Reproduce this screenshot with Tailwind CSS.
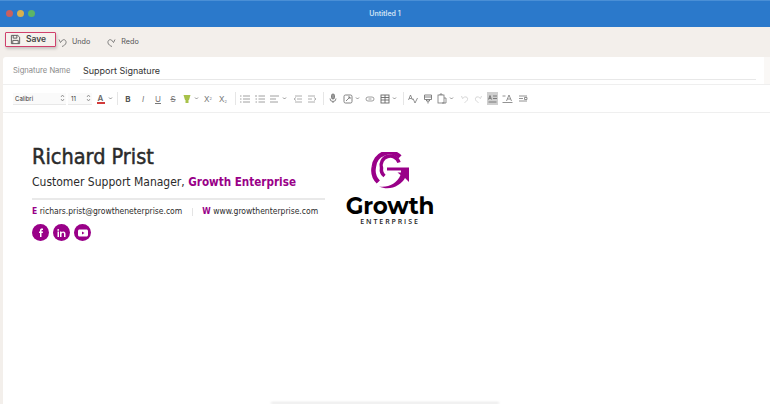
<!DOCTYPE html>
<html lang="en">
<head>
  <meta charset="UTF-8">
  <title>Untitled 1</title>
  <script src="https://cdn.jsdelivr.net/npm/@tailwindcss/browser@4"></script>
</head>
<body class="w-[770px] h-[404px] overflow-hidden bg-[#f3efeb] font-['Inter',sans-serif] text-[#3a3a3a]">
  <!-- Title bar -->
  <div class="relative h-[27px] flex items-center justify-center bg-[#2b79cb] border-t border-[#4a8fd6]">
    <div class="absolute left-[6px] top-[9px] flex gap-[4px]">
      <span class="w-[7px] h-[7px] rounded-full bg-[#c9605f]"></span>
      <span class="w-[7px] h-[7px] rounded-full bg-[#d8b04f]"></span>
      <span class="w-[7px] h-[7px] rounded-full bg-[#5cb567]"></span>
    </div>
    <span class="text-[7px] font-semibold text-[#cfe2f5]">Untitled 1</span>
  </div>

  <!-- Action bar -->
  <div class="h-[30px] flex items-center pl-[5px] text-[7.200px] text-[#555]">
    <div class="self-start mt-[5px] w-[51px] h-[15px] flex items-center gap-[5px] pl-[4px] border border-[#d0406c] rounded-[1px] bg-[#f5f1ed] shadow-[1px_2px_3px_rgba(0,0,0,0.18)]">
      <svg width="11" height="11" viewBox="0 0 12 12" fill="none" stroke="#555" stroke-width="1"><path d="M1.500 1.500h7l2 2v7h-9z"/><path d="M3.500 1.500v3h4v-3M3 10.500v-3.500h6v3.500"/></svg>
      <span class="text-[8.500px] font-semibold text-[#444]">Save</span>
    </div>
    <svg class="ml-[1px]" width="11" height="11" viewBox="0 0 11 11" fill="none" stroke="#666" stroke-width="0.8"><path d="M2 2.500l1.500 3 2-2.500c2-1 4 .5 3.500 3-.4 1.500-2 2.800-4 3.500"/></svg>
    <span class="ml-[4px]">Undo</span>
    <svg class="ml-[16px]" width="11" height="11" viewBox="0 0 11 11" fill="none" stroke="#666" stroke-width="0.8"><path d="M9 2.500l-1.500 3-2-2.500c-2-1-4 .5-3.500 3 .4 1.500 2 2.800 4 3.500"/></svg>
    <span class="ml-[4px]">Redo</span>
  </div>

  <!-- Editor card -->
  <div class="ml-[3px] h-[347px] bg-white rounded-tl-[3px] flex flex-col">
    <div class="h-[27px] shrink-0 flex items-center pl-[10px] pr-[8px] border-r-[6px] border-[#faf8f6]">
      <span class="w-[67px] text-[7.600px] text-[#8a8a8a]">Signature Name</span>
      <div class="flex-1 h-[18px] flex items-center pl-[3px] pt-[2px] border-b border-[#e8e8e8] text-[9px] text-[#333]">Support Signature</div>
    </div>

    <!-- Format toolbar -->
    <div class="h-[29px] shrink-0 flex items-center pl-[10px] border-y border-[#efefef] text-[#777]">
      <div class="w-[53px] h-[12px] flex items-center justify-between pl-[2px] pr-[1px] bg-[#fafafa] border-b border-[#e8e8e8]">
        <span class="text-[6px] text-[#333]">Calibri</span>
        <svg width="5" height="8" viewBox="0 0 5 8" fill="none" stroke="#777" stroke-width="0.7"><path d="M1 3l1.500-2L4 3M1 5l1.500 2L4 5"/></svg>
      </div>
      <div class="ml-[2px] w-[24px] h-[12px] flex items-center justify-between pl-[3px] pr-[1px] bg-[#fafafa] border-b border-[#e8e8e8]">
        <span class="text-[6px] text-[#333]">11</span>
        <svg width="5" height="8" viewBox="0 0 5 8" fill="none" stroke="#777" stroke-width="0.7"><path d="M1 3l1.500-2L4 3M1 5l1.500 2L4 5"/></svg>
      </div>
      <div class="ml-[3px] w-[11px] flex flex-col items-center">
        <span class="text-[8px] leading-[8px] font-semibold text-[#666]">A</span>
        <span class="w-[8px] h-[2px] bg-[#d23b3b]"></span>
      </div>
      <svg class="ml-[2px]" width="5" height="5" viewBox="0 0 5 5" fill="none" stroke="#777" stroke-width="0.8"><path d="M1 1.500l1.500 1.500L4 1.500"/></svg>
      <span class="ml-[4px] w-px h-[13px] bg-[#e6e6e6]"></span>

      <span class="ml-[5px] w-[10px] text-center text-[8px] font-bold text-[#555]">B</span>
      <span class="ml-[5px] w-[10px] text-center text-[8px] italic">I</span>
      <span class="ml-[5px] w-[10px] text-center text-[8px] underline">U</span>
      <span class="ml-[5px] w-[10px] text-center text-[8px] line-through">S</span>
      <svg class="ml-[4px]" width="10" height="10" viewBox="0 0 10 10" fill="#a8c24a"><path d="M1.500 1h7L7 6H3z"/><rect x="3.500" y="6" width="3" height="3"/></svg>
      <svg class="ml-[2px]" width="5" height="5" viewBox="0 0 5 5" fill="none" stroke="#777" stroke-width="0.8"><path d="M1 1.500l1.500 1.500L4 1.500"/></svg>
      <span class="ml-[5px] w-[10px] text-[8px]">X<sup class="text-[4px]">2</sup></span>
      <span class="ml-[5px] w-[10px] text-[8px]">X<sub class="text-[4px]">2</sub></span>
      <span class="ml-[6px] w-px h-[13px] bg-[#e6e6e6]"></span>

      <!-- Lists -->
      <svg class="ml-[4px]" width="10" height="10" viewBox="0 0 10 10" fill="none" stroke="#888" stroke-width="0.8"><path d="M3 2h7M3 5h7M3 8h7M0 2h1.500M0 5h1.500M0 8h1.500"/></svg>
      <svg class="ml-[5px]" width="10" height="10" viewBox="0 0 10 10" fill="none" stroke="#888" stroke-width="0.8"><path d="M3.500 2h6.500M3.500 5h6.500M3.500 8h6.500M1 1v2M0.500 5h1.500M0.500 8h1.500"/></svg>
      <svg class="ml-[5px]" width="10" height="10" viewBox="0 0 10 10" fill="none" stroke="#888" stroke-width="0.8"><path d="M0 2h9M0 5h6M0 8h8"/></svg>
      <svg class="ml-[2px]" width="5" height="5" viewBox="0 0 5 5" fill="none" stroke="#777" stroke-width="0.8"><path d="M1 1.500l1.500 1.500L4 1.500"/></svg>
      <svg class="ml-[6px]" width="10" height="10" viewBox="0 0 10 10" fill="none" stroke="#999" stroke-width="0.8"><path d="M2 2h7M4 5h5M2 8h7M3 3.500L1 5l2 1.500"/></svg>
      <svg class="ml-[4px]" width="10" height="10" viewBox="0 0 10 10" fill="none" stroke="#999" stroke-width="0.8"><path d="M1 2h7M1 5h4M1 8h7M7 3.500L9 5 7 6.500"/></svg>
      <span class="ml-[6px] w-px h-[13px] bg-[#e6e6e6]"></span>

      <!-- Insert -->
      <svg class="ml-[4px]" width="10" height="11" viewBox="0 0 10 11" fill="none" stroke="#777" stroke-width="0.9"><rect x="3.500" y="1" width="3" height="5" rx="1.500" fill="#999"/><path d="M2 5.500a3 3 0 0 0 6 0M5 8.500V10"/></svg>
      <svg class="ml-[5px]" width="10" height="10" viewBox="0 0 10 10" fill="none" stroke="#777" stroke-width="0.9"><rect x="1" y="1" width="8" height="8" rx="1.500"/><path d="M3 7l4-4M5 3h2v2"/></svg>
      <svg class="ml-[2px]" width="5" height="5" viewBox="0 0 5 5" fill="none" stroke="#777" stroke-width="0.8"><path d="M1 1.500l1.500 1.500L4 1.500"/></svg>
      <svg class="ml-[5px]" width="10" height="10" viewBox="0 0 10 10" fill="none" stroke="#888" stroke-width="0.8"><rect x="1" y="3" width="8" height="4" rx="2"/><path d="M3.500 5h3"/></svg>
      <svg class="ml-[5px]" width="10" height="10" viewBox="0 0 10 10" fill="none" stroke="#666" stroke-width="0.9"><rect x="1" y="1" width="8" height="8"/><path d="M1 3.500h8M1 6h8M5 1v8"/></svg>
      <svg class="ml-[2px]" width="5" height="5" viewBox="0 0 5 5" fill="none" stroke="#777" stroke-width="0.8"><path d="M1 1.500l1.500 1.500L4 1.500"/></svg>
      <span class="ml-[6px] w-px h-[13px] bg-[#e6e6e6]"></span>

      <!-- Tools -->
      <svg class="ml-[4px]" width="10" height="10" viewBox="0 0 10 10" fill="none" stroke="#777" stroke-width="0.8"><path d="M0.500 6l2-5 2 5M1.300 4.500h2.400M5 4.500l2 4.500 2.500-5"/></svg>
      <svg class="ml-[5px]" width="10" height="10" viewBox="0 0 10 10" fill="none" stroke="#777" stroke-width="0.9"><path d="M1.500 1h7v4.500h-7zM3.500 5.500V7h3V5.500M5 7v2.500M1.500 3h7"/></svg>
      <svg class="ml-[4px]" width="10" height="11" viewBox="0 0 10 11" fill="none" stroke="#777" stroke-width="0.8"><rect x="1" y="2" width="6" height="8"/><path d="M3 2V1h2v1M7 5h2v5H5"/></svg>
      <svg class="ml-[2px]" width="5" height="5" viewBox="0 0 5 5" fill="none" stroke="#777" stroke-width="0.8"><path d="M1 1.500l1.500 1.500L4 1.500"/></svg>
      <svg class="ml-[6px]" width="10" height="10" viewBox="0 0 10 10" fill="none" stroke="#ccc" stroke-width="0.8"><path d="M1.500 2l1 2.500 2-1.500c2-.5 3.500.5 3 2.500-.3 1.300-1.500 2.300-3 3"/></svg>
      <svg class="ml-[3px]" width="10" height="10" viewBox="0 0 10 10" fill="none" stroke="#ccc" stroke-width="0.8"><path d="M8.500 2l-1 2.500-2-1.500c-2-.5-3.500.5-3 2.500.3 1.300 1.500 2.300 3 3"/></svg>
      <div class="ml-[4px] w-[11px] h-[13px] flex items-center justify-center bg-[#cfcfcf]">
        <svg width="9" height="10" viewBox="0 0 9 10" fill="none" stroke="#666" stroke-width="0.8"><path d="M0.500 5.500l1.500-4 1.500 4M1 4.300h2M5 2h4M5 4.500h4M0.500 8h8"/></svg>
      </div>
      <svg class="ml-[4px]" width="11" height="10" viewBox="0 0 11 10" fill="none" stroke="#777" stroke-width="0.8"><path d="M4.500 7l2.500-6 2.500 6M5.500 5h3M0.500 2h3M0.500 8.500h10"/></svg>
      <svg class="ml-[5px]" width="10" height="9" viewBox="0 0 10 9" fill="none" stroke="#777" stroke-width="0.8"><path d="M1 2h8M1 4.500h4M1 7h8M6.500 3.500h2.500v2H6.500z"/></svg>
    </div>

    <!-- Signature body -->
    <div class="relative flex-1 flex pl-[29px] pt-[32px]">
      <div class="w-[293px] shrink-0 text-[#2b2b2b] font-['DejaVu_Sans_Condensed','Open_Sans',sans-serif]">
        <h1 class="text-[21.500px] leading-[24px] font-normal [-webkit-text-stroke:0.5px_#2b2b2b] whitespace-nowrap">Richard Prist</h1>
        <p class="mt-[6px] text-[12px] leading-[14px] whitespace-nowrap">Customer Support Manager, <span class="text-[11.600px] font-bold text-[#990088]">Growth Enterprise</span></p>
        <div class="mt-[9px] h-[2px] bg-[#e9e9e9]"></div>
        <div class="mt-[6px] flex items-center text-[8.500px] leading-[11px] whitespace-nowrap">
          <span><b class="text-[#990088]">E</b> richars.prist@growtheneterprise.com</span>
          <span class="ml-[10px] w-px h-[8px] bg-[#e4e4e4]"></span>
          <span class="ml-[9px]"><b class="text-[#990088]">W</b> www.growthenterprise.com</span>
        </div>
        <div class="mt-[7px] flex gap-[4px]">
          <span class="w-[17px] h-[17px] rounded-full bg-[#990088] flex items-center justify-center">
            <svg width="8" height="9" viewBox="0 0 8 9" fill="#fff"><path d="M3 9V5H2V3.500h1V2.500C3 1 3.800.5 5 .5h1V2H5.200c-.5 0-.7.200-.7.700v.8H6L5.800 5H4.500v4z"/></svg>
          </span>
          <span class="w-[17px] h-[17px] rounded-full bg-[#990088] flex items-center justify-center">
            <svg width="9" height="8" viewBox="0 0 9 8" fill="#fff"><path d="M.5 2.500h1.500V8H.5zM1.200 0a.9.9 0 1 1 0 1.800.9.9 0 0 1 0-1.800zM3 2.500h1.500v.8C5 2.600 5.600 2.400 6.300 2.400 7.900 2.400 8.500 3.300 8.500 5v3H7V5.300c0-1-.3-1.500-1-1.500s-1.500.5-1.500 1.500V8H3z"/></svg>
          </span>
          <span class="w-[17px] h-[17px] rounded-full bg-[#990088] flex items-center justify-center">
            <svg width="10" height="8" viewBox="0 0 10 8" fill="#fff"><path fill-rule="evenodd" d="M1.500.5h7c.8 0 1.500.7 1.500 1.500v4c0 .8-.7 1.500-1.500 1.500h-7C.7 7.500 0 6.800 0 6V2C0 1.200.7.500 1.500.5zM4 2.500v3L6.500 4z"/></svg>
          </span>
        </div>
      </div>

      <!-- Logo -->
      <div class="ml-[20px] w-[90px] shrink-0 flex flex-col items-center mt-[7px]">
        <svg width="38" height="38" viewBox="0 0 38 38" fill="none">
          <path d="M29 4.800A15.500 15.500 0 0 0 2.800 15c-1.200 6 .5 11 4.500 15" stroke="#990088" stroke-width="4.500"/>
          <path d="M28 10.500A9 9 0 0 0 10.500 16c-.5 3 .5 6 3 8" stroke="#990088" stroke-width="3.500"/>
          <path d="M16 15.500h22v14.500l-4-4c-3.500 7-15 13.500-26 8.500 9 1.500 18-3 21.500-11.500l-3-2.500h3.500v-2H16z" fill="#990088"/>
        </svg>
        <span class="mt-[5px] text-[23px] leading-[22px] font-bold text-black font-['Montserrat','Open_Sans',sans-serif] tracking-[-0.2px]">Growth</span>
        <span class="mt-[1px] text-[7px] leading-[8px] font-semibold tracking-[1.900px] text-[#222] font-['Open_Sans',sans-serif]">ENTERPRISE</span>
      </div>
      <div class="absolute left-[268px] bottom-0 w-[228px] h-[2px] bg-[#e8e8e8] blur-[1px]"></div>
    </div>
  </div>
</body>
</html>
